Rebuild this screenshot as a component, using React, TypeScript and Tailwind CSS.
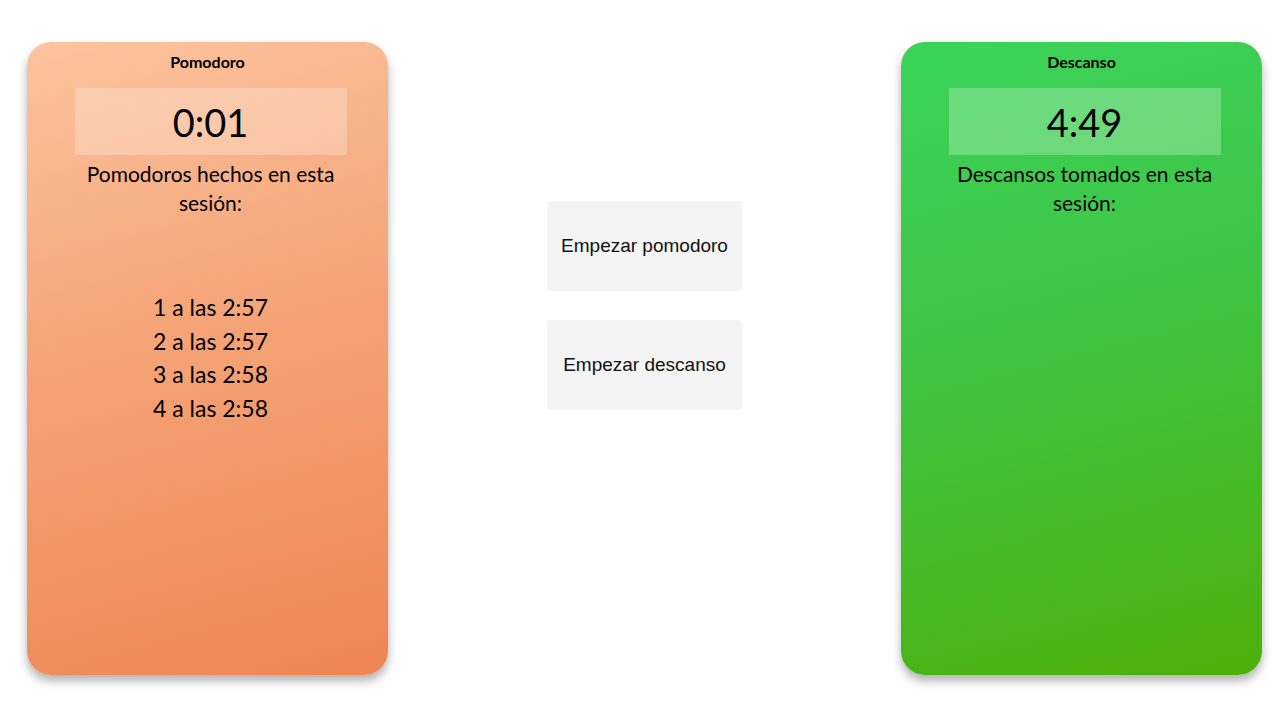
import React from "react";

const font = { fontFamily: "Lato, 'Noto Sans', sans-serif" };

function Card({
  title,
  time,
  label,
  items,
  bg,
}: {
  title: string;
  time: string;
  label: string;
  items: string[];
  bg: string;
}) {
  return (
    <div
      className={`w-[361px] h-[633px] rounded-[24px] flex flex-col items-center text-black shadow-[0_6px_10px_rgba(0,0,0,0.3)] ${bg}`}
      style={font}
    >
      <div className="mt-[10px] text-[16px] font-bold leading-[20px]">{title}</div>
      <div className="mt-[16px] ml-[6px] w-[272px] h-[67px] bg-white/25 flex items-center justify-center text-[38px] font-normal leading-none">
        {time}
      </div>
      <div className="mt-[4px] ml-[6px] w-[272px] text-center text-[21px] leading-[29px]">{label}</div>
      {items.length > 0 && (
        <div className="mt-[74px] ml-[6px] flex flex-col items-center text-[23px] leading-[33.5px]">
          {items.map((it) => (
            <div key={it}>{it}</div>
          ))}
        </div>
      )}
    </div>
  );
}

export default function App() {
  return (
    <div className="w-[1280px] h-[703px] bg-white flex justify-between items-start pt-[42px] pl-[27px] pr-[18px]">
      <Card
        title="Pomodoro"
        time="0:01"
        label="Pomodoros hechos en esta sesión:"
        items={["1 a las 2:57", "2 a las 2:57", "3 a las 2:58", "4 a las 2:58"]}
        bg="bg-[linear-gradient(165deg,#fcc39f_0%,#f5a77b_40%,#ef8551_100%)]"
      />
      <div className="mt-[159px] flex flex-col gap-[29px]" style={{ fontFamily: "'Liberation Sans', Arial, sans-serif" }}>
        <button className="w-[195px] h-[90px] bg-[#f4f4f4] rounded-[4px] text-[19px] text-[#111]">
          Empezar pomodoro
        </button>
        <button className="w-[195px] h-[90px] bg-[#f4f4f4] rounded-[4px] text-[19px] text-[#111]">
          Empezar descanso
        </button>
      </div>
      <Card
        title="Descanso"
        time="4:49"
        label="Descansos tomados en esta sesión:"
        items={[]}
        bg="bg-[linear-gradient(165deg,#3bd45b_0%,#3fc443_45%,#4db00a_100%)]"
      />
    </div>
  );
}
